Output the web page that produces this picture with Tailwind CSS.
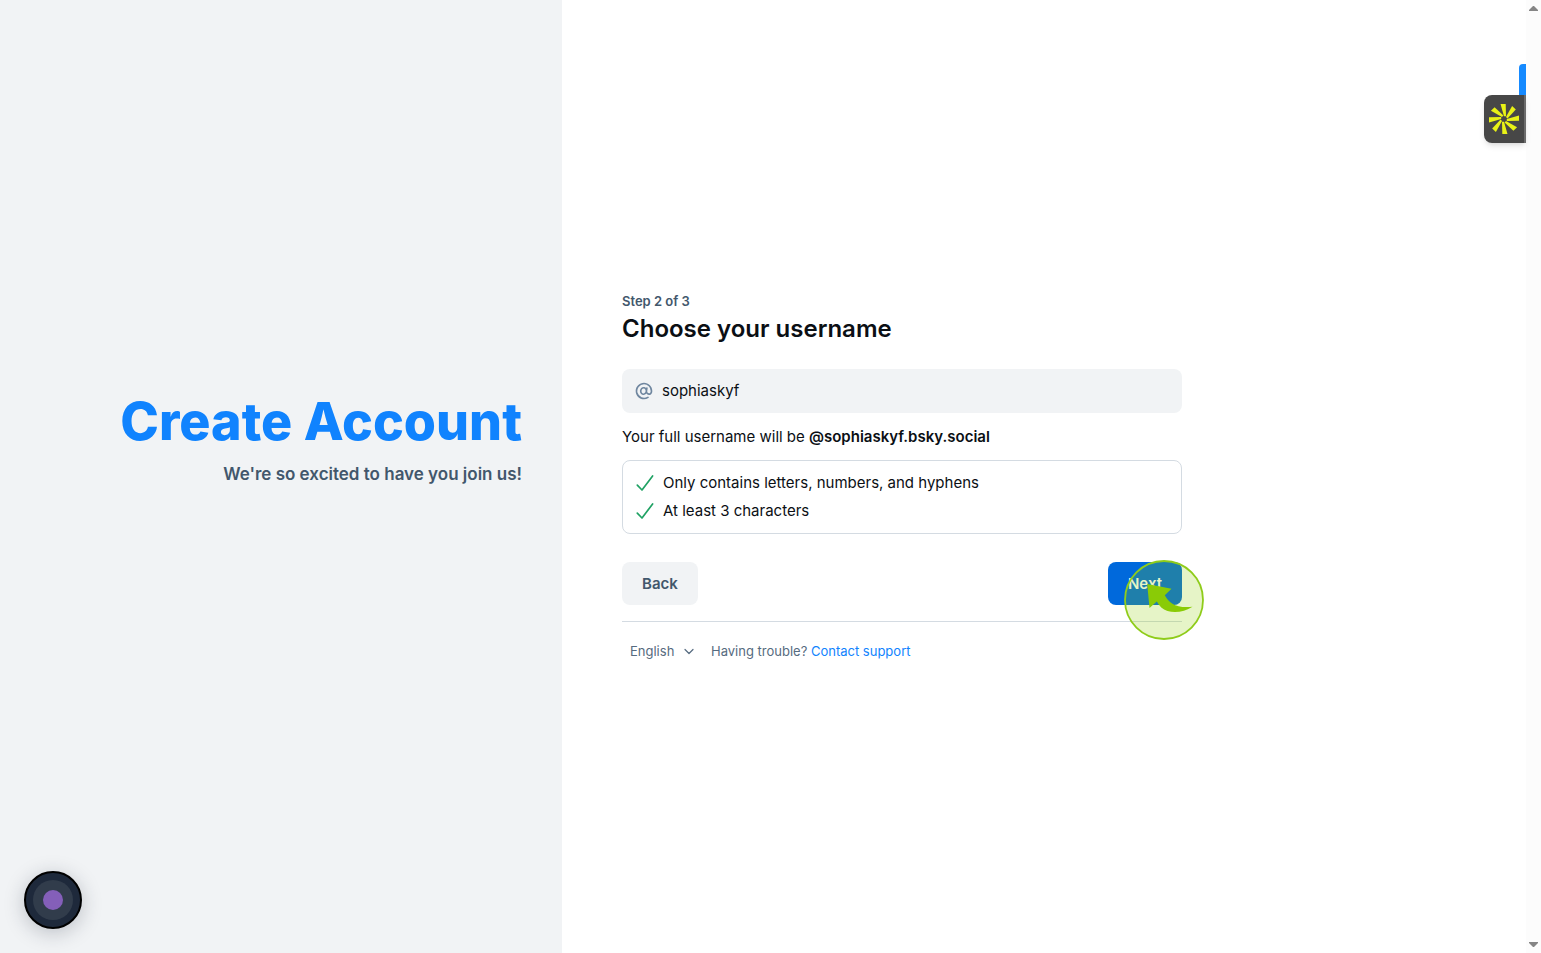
<!DOCTYPE html>
<html lang="en">
<head>
  <meta charset="UTF-8" />
  <meta name="viewport" content="width=device-width, initial-scale=1.0" />
  <title>Create Account</title>
  <script src="https://cdn.jsdelivr.net/npm/@tailwindcss/browser@4"></script>
</head>
<body class="flex min-h-screen overflow-hidden bg-white font-['Inter',sans-serif] text-[15px] leading-5 text-[#0b0f14]">
  <div class="relative flex flex-1">
    <!-- Left panel -->
    <div class="flex w-[calc(50%-201px)] flex-col items-end justify-center bg-[#f1f3f5] px-10 pb-[78px] text-right">
      <h1 class="text-[52px] font-extrabold leading-16 text-[#1083fe]">Create Account</h1>
      <p class="mt-2 text-[17px] font-semibold leading-6 text-[#42576c]">We're so excited to have you join us!</p>
    </div>

    <!-- Form -->
    <main class="flex flex-1 flex-col justify-center px-15 pt-px">
      <form class="w-full max-w-140" onsubmit="return false">
        <p class="text-[13px] font-semibold leading-4 text-[#42576c]">Step 2 of 3</p>
        <h2 class="mt-1 text-2xl font-semibold leading-8">Choose your username</h2>

        <div class="mt-6 flex h-11 items-center gap-2 rounded-lg bg-[#f1f3f5] px-3">
          <svg class="size-5 shrink-0" viewBox="0 0 24 24" fill="#6f869f" aria-hidden="true">
            <path fill-rule="evenodd" clip-rule="evenodd" d="M12 4a8 8 0 1 0 4.21 14.804 1 1 0 0 1 1.054 1.7A9.958 9.958 0 0 1 12 22C6.477 22 2 17.523 2 12S6.477 2 12 2s10 4.477 10 10c0 1.104-.27 2.31-.949 3.243-.716.984-1.849 1.6-3.331 1.465a4.207 4.207 0 0 1-2.93-1.585c-.94 1.21-2.388 1.94-3.985 1.715-2.53-.356-4.04-2.91-3.682-5.458.358-2.547 2.514-4.586 5.044-4.23.905.127 1.68.536 2.286 1.126a1 1 0 0 1 1.964.368l-.515 3.545v.002a2.222 2.222 0 0 0 1.999 2.526c.75.068 1.212-.21 1.533-.65.358-.493.566-1.245.566-2.067a8 8 0 0 0-8-8Zm-.112 5.13c-1.195-.168-2.544.819-2.784 2.529-.24 1.71.784 3.03 1.98 3.198 1.195.168 2.543-.819 2.784-2.529.24-1.71-.784-3.03-1.98-3.198Z"/>
          </svg>
          <input type="text" value="sophiaskyf" aria-label="Username" class="min-w-0 flex-1 bg-transparent outline-none" />
        </div>

        <p class="mt-3.5">Your full username will be <strong class="font-semibold">@sophiaskyf.bsky.social</strong></p>

        <ul class="mt-[13px] flex flex-col gap-2 rounded-lg border border-[#d4dbe2] p-3">
          <li class="flex items-center gap-2">
            <svg class="size-5" viewBox="0 0 20 20" fill="none" stroke="#20a264" stroke-width="1.7" stroke-linecap="round" stroke-linejoin="round" aria-hidden="true"><path d="M2.3 12.2 7 17 17.6 3"/></svg>
            Only contains letters, numbers, and hyphens
          </li>
          <li class="flex items-center gap-2">
            <svg class="size-5" viewBox="0 0 20 20" fill="none" stroke="#20a264" stroke-width="1.7" stroke-linecap="round" stroke-linejoin="round" aria-hidden="true"><path d="M2.3 12.2 7 17 17.6 3"/></svg>
            At least 3 characters
          </li>
        </ul>

        <div class="mt-7 flex justify-between border-b border-[#d4dbe2] pb-4">
          <button type="button" class="h-[43px] rounded-lg bg-[#f1f3f5] px-5 font-semibold text-[#42576c]">Back</button>
          <div class="relative">
            <button type="submit" class="h-[43px] rounded-lg bg-[#0069dc] px-5 font-semibold text-white">Next</button>
            <!-- Click highlight -->
            <svg class="pointer-events-none absolute -top-0.5 left-4 size-20" viewBox="0 0 80 80" aria-hidden="true">
              <circle cx="40" cy="40" r="39" fill="#8fcc00" fill-opacity=".22" stroke="#8fcc1a" stroke-width="1.8"/>
              <path fill="#8acb06" d="M23.2 24 47.5 28.7 40.8 35.2C45 43 52 48.500 68.500 46.800 61 51.500 51.500 53.500 43.500 51 38.500 49.500 35.500 46 32.800 41.500L25.500 48Z"/>
            </svg>
          </div>
        </div>

        <div class="mt-[19px] flex items-center text-[13px] text-[#566b80]">
          <div class="relative flex items-center">
            <select aria-label="Language" class="w-[81px] appearance-none bg-transparent pl-2 leading-5 outline-none">
              <option>English</option>
            </select>
            <svg class="pointer-events-none absolute right-2 size-3" viewBox="0 0 12 12" fill="none" stroke="#566b80" stroke-width="1.2" stroke-linecap="round" stroke-linejoin="round" aria-hidden="true"><path d="M2 4.500 6 8.500 10 4.500"/></svg>
          </div>
          <p class="ml-2">Having trouble? <a href="#" class="text-[#1083fe]">Contact support</a></p>
        </div>
      </form>
    </main>

    <!-- Extension tabs on the right edge -->
    <div class="absolute right-0 top-16 h-10 w-[7px] rounded-tl bg-[#168aff]"></div>
    <button type="button" aria-label="Open extension" class="absolute right-0 top-[95px] flex h-12 w-[42px] items-center rounded-l-lg border-r-2 border-[#6b6b6b] bg-[#474747] pl-1 shadow-md shadow-black/10">
      <svg class="size-8" viewBox="-16 -16 32 32" fill="#e8f216" aria-hidden="true">
        <path id="ray" d="M-3.500-15H1.700L2-2.800H0Z"/>
        <use href="#ray" transform="rotate(45)"/>
        <use href="#ray" transform="rotate(90)"/>
        <use href="#ray" transform="rotate(135)"/>
        <use href="#ray" transform="rotate(180)"/>
        <use href="#ray" transform="rotate(225)"/>
        <use href="#ray" transform="rotate(270)"/>
        <use href="#ray" transform="rotate(315)"/>
      </svg>
    </button>

    <!-- Recorder bubble -->
    <button type="button" aria-label="Recorder" class="absolute bottom-6 left-6 flex size-[58px] items-center justify-center rounded-full border-2 border-black bg-[#1e293b] shadow-[0_4px_20px_rgba(30,41,59,0.25)]">
      <span class="flex size-10 items-center justify-center rounded-full bg-[#313c4b]">
        <span class="size-5 rounded-full bg-[#845fb9]"></span>
      </span>
    </button>
  </div>

  <!-- Scrollbar -->
  <div class="flex w-[15px] flex-col items-center justify-between bg-[#fcfcfc] py-1.5">
    <svg class="h-[5px] w-[9px]" viewBox="0 0 9 5" fill="#858585" aria-hidden="true"><path d="M4 0H5L9 4V5H0V4Z"/></svg>
    <svg class="h-[5px] w-[9px]" viewBox="0 0 9 5" fill="#858585" aria-hidden="true"><path d="M0 0H9V1L5 5H4L0 1Z"/></svg>
  </div>
</body>
</html>
